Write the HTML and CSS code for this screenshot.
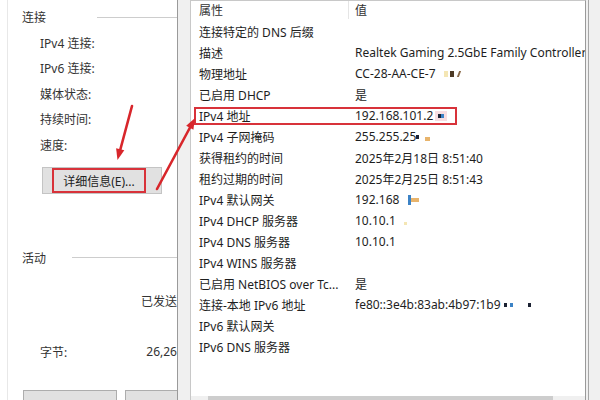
FILE: index.html
```html
<!DOCTYPE html>
<html lang="zh-CN">
<head>
<meta charset="utf-8">
<title>网络连接详细信息</title>
<link rel="stylesheet" href="styles.css">
</head>
<body>
<div class="screen">
  <div class="left">
    <div class="left-inner">
      <div class="grp"><span>连接</span><i class="rule rule-1"></i></div>
      <div class="fields">
        <div class="field">IPv4 连接:</div>
        <div class="field">IPv6 连接:</div>
        <div class="field">媒体状态:</div>
        <div class="field">持续时间:</div>
        <div class="field">速度:</div>
      </div>
      <div class="btn"><span class="hl">详细信息(E)...</span></div>
      <div class="grp grp-2"><span>活动</span><i class="rule rule-2"></i></div>
      <div class="sent">已发送</div>
      <div class="bytes"><span class="bytes-label">字节:</span><span class="bytes-val">26,26</span></div>
      <div class="bottom-btns"><div class="bbtn bbtn-1"></div><div class="bbtn bbtn-2"></div></div>
    </div>
  </div>
  <div class="right">
    <div class="list">
      <div class="head"><span class="h1">属性</span><i class="sep"></i><span class="h2">值</span></div>
      <div class="row"><span class="c1">连接特定的 DNS 后缀</span><span class="c2"></span></div>
      <div class="row"><span class="c1">描述</span><span class="c2">Realtek Gaming 2.5GbE Family Controller</span></div>
      <div class="row"><span class="c1">物理地址</span><span class="c2">CC-28-AA-CE-7<i class="m m-yl mac-1"></i><i class="m m-br mac-2"></i><i class="m m-tick"></i></span></div>
      <div class="row"><span class="c1">已启用 DHCP</span><span class="c2">是</span></div>
      <div class="row"><span class="c1">IPv4 地址</span><span class="c2">192.168.101.2<span class="smudge"><i class="m m-dk sq"></i><i class="m m-bl sq"></i></span></span><i class="redbox"></i></div>
      <div class="row"><span class="c1">IPv4 子网掩码</span><span class="c2">255.255.25<i class="m m-dk sq"></i><i class="m m-or mask-2"></i></span></div>
      <div class="row"><span class="c1">获得租约的时间</span><span class="c2">2025年2月18日 8:51:40</span></div>
      <div class="row"><span class="c1">租约过期的时间</span><span class="c2">2025年2月25日 8:51:43</span></div>
      <div class="row"><span class="c1">IPv4 默认网关</span><span class="c2">192.168<i class="m m-bl gw-1"></i><i class="m m-or gw-2"></i></span></div>
      <div class="row"><span class="c1">IPv4 DHCP 服务器</span><span class="c2">10.10.1<i class="m m-yl dh"></i></span></div>
      <div class="row"><span class="c1">IPv4 DNS 服务器</span><span class="c2">10.10.1</span></div>
      <div class="row"><span class="c1">IPv4 WINS 服务器</span><span class="c2"></span></div>
      <div class="row"><span class="c1">已启用 NetBIOS over Tc...</span><span class="c2">是</span></div>
      <div class="row"><span class="c1">连接-本地 IPv6 地址</span><span class="c2">fe80::3e4b:83ab:4b97:1b9<i class="m m-dk sq v6-1"></i><i class="m m-bl sq v6-2"></i><i class="m m-dk sq v6-3"></i></span></div>
      <div class="row"><span class="c1">IPv6 默认网关</span><span class="c2"></span></div>
      <div class="row"><span class="c1">IPv6 DNS 服务器</span><span class="c2"></span></div>
      <div class="hscroll"><i class="sb-arrow"></i><i class="sb-thumb"></i></div>
    </div>
    <i class="edge"></i>
  </div>
  <svg class="arrows" width="600" height="400" viewBox="0 0 600 400">
    <line x1="132" y1="106" x2="120.2" y2="150" stroke="#d8262b" stroke-width="2.6" stroke-linecap="round"/>
    <polygon points="117.5,160 124.3,150.3 116.1,148.3" fill="#d8262b"/>
    <line x1="157" y1="189" x2="190" y2="127.5" stroke="#d8262b" stroke-width="2.6" stroke-linecap="round"/>
    <polygon points="195,118 193.4,129.8 186.2,125.8" fill="#d8262b"/>
  </svg>
</div>
</body>
</html>
```

FILE: styles.css
```css
html, body {
  margin: 0;
  padding: 0;
}
body {
  background: #f0f0f0;
  font-family: "Noto Sans", "Noto Sans CJK SC", sans-serif;
  font-size: 12px;
  color: #222;
  overflow: hidden;
}
.screen {
  position: relative;
  display: flex;
  width: 600px;
  height: 400px;
  overflow: hidden;
}

/* left dialog */
.left {
  flex: none;
  width: 177px;
  height: 400px;
  background: #fff;
  border-right: 1px solid #9a9a9a;
  overflow: hidden;
}
.left-inner {
  margin-left: 7px;
  padding-left: 14px;
  height: 100%;
  border-left: 1px solid #e8e8e8;
  color: #333;
}
.grp {
  display: flex;
  align-items: center;
  height: 30px;
  padding-top: 4px;
  box-sizing: border-box;
  white-space: nowrap;
}
.rule {
  margin-left: auto;
  height: 1px;
  background: #cdcdcd;
}
.rule-1 { width: 80px; }
.rule-2 { width: 105px; }
.grp-2 { margin-top: 46.5px; }
.fields { padding-left: 18px; }
.field {
  height: 25.5px;
  display: flex;
  align-items: center;
  white-space: nowrap;
}
.btn {
  margin-top: 9.5px;
  margin-left: 20px;
  width: 120px;
  height: 27px;
  box-sizing: border-box;
  background: #e1e1e1;
  border: 1px solid #c4c4c4;
  display: flex;
  align-items: center;
}
.hl {
  margin-left: 9px;
  width: 94px;
  height: 25px;
  box-sizing: border-box;
  border: 2px solid #d8323a;
  display: flex;
  align-items: center;
  justify-content: center;
  color: #222;
  white-space: nowrap;
}
.sent {
  margin-top: 21px;
  height: 20px;
  line-height: 20px;
  text-align: right;
  white-space: nowrap;
}
.bytes {
  margin-top: 30px;
  height: 20px;
  display: flex;
  align-items: center;
  padding-left: 18px;
  white-space: nowrap;
}
.bytes-label {
  flex: none;
}
.bytes-val {
  margin-left: auto;
}
.bottom-btns {
  margin-top: 28px;
  margin-left: 1px;
  display: flex;
  gap: 8px;
}
.bbtn {
  flex: none;
  height: 24px;
  box-sizing: border-box;
  background: #e1e1e1;
  border: 1px solid #adadad;
}
.bbtn-1 { width: 94px; }
.bbtn-2 { width: 70px; }

/* right dialog */
.right {
  flex: 1;
  display: flex;
  padding-left: 12px;
  background: #f0f0f0;
}
.list {
  flex: none;
  width: 396px;
  height: 414px;
  box-sizing: border-box;
  border: 1px solid #c8c8c8;
  border-right-color: #9a9a9a;
  background: #fff;
  display: flex;
  flex-direction: column;
  overflow: hidden;
}
.edge {
  flex: none;
  margin-left: 2px;
  width: 1px;
  background: #a6a6a6;
}
.head {
  flex: none;
  display: flex;
  align-items: center;
  height: 20px;
  padding-bottom: 2px;
  box-sizing: border-box;
  color: #333;
}
.h1 {
  width: 157px;
  padding-left: 8px;
  box-sizing: border-box;
}
.sep {
  align-self: stretch;
  width: 1px;
  background: #e5e5e5;
}
.h2 { padding-left: 6px; }
.row {
  position: relative;
  flex: none;
  display: flex;
  align-items: center;
  height: 21px;
  white-space: nowrap;
  color: #1e1e1e;
}
.c1 {
  flex: none;
  width: 164px;
  padding-left: 8px;
  box-sizing: border-box;
  overflow: hidden;
}
.c2 {
  flex: 1;
  display: flex;
  align-items: center;
  overflow: hidden;
}
.redbox {
  position: absolute;
  left: 3px;
  top: 2px;
  width: 263px;
  height: 18px;
  box-sizing: border-box;
  border: 2px solid #d8323a;
}

/* pixelated redaction marks */
.m {
  display: inline-block;
  flex: none;
}
.m-dk { background: #1c2233; }
.m-bl { background: #3c83c6; }
.m-or { background: #e8b46c; }
.m-yl { background: #f4e6b4; }
.m-br { background: #4d3a26; }
.sq { width: 3px; height: 4px; }
.mac-1 { width: 4px; height: 6px; margin-left: 8px; }
.mac-2 { width: 4px; height: 6px; margin-left: 2px; }
.m-tick {
  width: 2px;
  height: 6px;
  margin-left: 4px;
  background: #8a6a4a;
  transform: skewX(-20deg);
}
.smudge {
  display: inline-flex;
  align-items: center;
  margin-left: 2px;
  padding: 3px 3px;
  background: #f7dde1;
}
.mask-2 { width: 5px; height: 4px; margin-left: 6px; margin-top: 4px; }
.gw-1 { width: 3px; height: 10px; margin-left: 9px; }
.gw-2 { width: 8px; height: 4px; }
.dh { width: 3px; height: 3px; margin-left: 8px; margin-top: 5px; }
.v6-1 { margin-left: 3px; }
.v6-2 { margin-left: 3px; }
.v6-3 { margin-left: 15px; }

.hscroll {
  margin-top: auto;
  flex: none;
  display: flex;
  height: 17px;
  background: #f0f0f0;
}
.sb-arrow { width: 17px; }
.sb-thumb {
  width: 345px;
  background: #cdcdcd;
}

.arrows {
  position: absolute;
  left: 0;
  top: 0;
  pointer-events: none;
}
```
